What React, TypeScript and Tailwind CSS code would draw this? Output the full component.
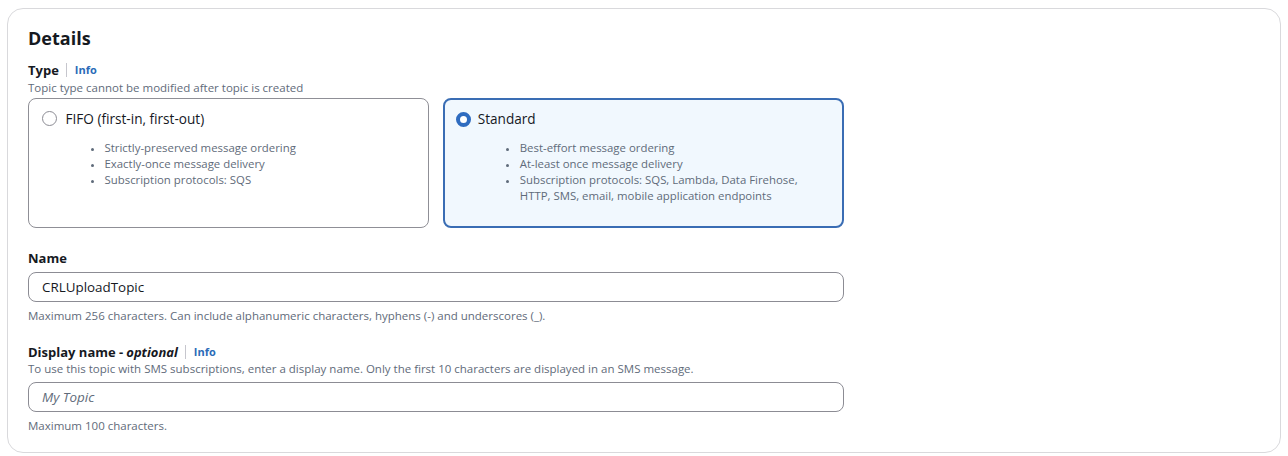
import { ReactNode } from "react";

const font = { fontFamily: '"Open Sans", "Noto Sans", sans-serif' };

const Info = () => (
  <span className="ml-[7px] border-l border-[#c6c6cd] pl-[8px] text-[11px] font-bold text-[#2a6bb8] leading-[14px]">
    Info
  </span>
);

type TileProps = {
  title: string;
  items: ReactNode[];
  selected?: boolean;
};

const Tile = ({ title, items, selected }: TileProps) => (
  <div
    className={
      selected
        ? "flex-1 h-[130px] rounded-[8px] border-2 border-[#3a6db4] bg-[#f1f8fe] pl-[10.5px] pr-[12px] pt-[10px]"
        : "flex-1 h-[130px] rounded-[8px] border-[1.5px] border-[#8f8f96] bg-white px-[12.5px] pt-[10.5px]"
    }
  >
    <div className={selected ? "flex items-center gap-[7px]" : "flex items-center gap-[9px]"}>
      {selected ? (
        <span className="h-[15px] w-[15px] rounded-full border-[4px] border-[#2f6cc0] bg-white" />
      ) : (
        <span className="h-[15px] w-[15px] rounded-full border-[1.5px] border-[#8c8c94] bg-white" />
      )}
      <span className="text-[13.6px] text-[#16191f] leading-[18px]">{title}</span>
    </div>
    <ul
      className={
        (selected ? "ml-[63px]" : "ml-[62px]") +
        " mt-[12px] list-disc text-[11.4px] leading-[16px] text-[#5f6b7a] marker:text-[9px]"
      }
    >
      {items.map((t, i) => (
        <li key={i} className="pl-[1px]">
          {t}
        </li>
      ))}
    </ul>
  </div>
);

const Field = ({
  label,
  desc,
  children,
  hint,
}: {
  label: ReactNode;
  desc?: string;
  children: ReactNode;
  hint: string;
}) => (
  <div className="flex flex-col">
    <div className="flex items-center text-[13px] font-bold leading-[16px] text-[#16191f]">{label}</div>
    {desc && <div className="text-[11.5px] leading-[14px] text-[#5f6b7a] mt-[2px]">{desc}</div>}
    {children}
    <div className="mt-[7px] text-[11.5px] leading-[14px] text-[#5f6b7a]">{hint}</div>
  </div>
);

export default function App() {
  return (
    <div className="min-h-[456px] w-[1288px] bg-white p-[7px] pt-[8px]" style={font}>
      <div className="h-[445px] w-[1274px] rounded-[16px] border border-[#d9d9dc] bg-white pl-[20px] pt-[17px]">
        <div className="w-[816px]">
          <h2 className="text-[18px] font-bold leading-[24px] text-[#16191f]">Details</h2>

          <div className="mt-[12px] flex items-center text-[13px] font-bold leading-[16px] text-[#16191f]">
            Type
            <Info />
          </div>
          <div className="mt-[3px] text-[11.5px] leading-[14px] text-[#5f6b7a]">
            Topic type cannot be modified after topic is created
          </div>

          <div className="mt-[3px] flex gap-[14px]">
            <Tile
              title="FIFO (first-in, first-out)"
              items={[
                "Strictly-preserved message ordering",
                "Exactly-once message delivery",
                "Subscription protocols: SQS",
              ]}
            />
            <Tile
              selected
              title="Standard"
              items={[
                "Best-effort message ordering",
                "At-least once message delivery",
                <>
                  Subscription protocols: SQS, Lambda, Data Firehose,
                  <br />
                  HTTP, SMS, email, mobile application endpoints
                </>,
              ]}
            />
          </div>

          <div className="mt-[22px]">
            <Field
              label="Name"
              hint="Maximum 256 characters. Can include alphanumeric characters, hyphens (-) and underscores (_)."
            >
              <div className="mt-[6px] flex h-[30px] items-center rounded-[8px] border-[1.5px] border-[#8c8c94] px-[13px] text-[13.4px] text-[#16191f]">
                CRLUploadTopic
              </div>
            </Field>
          </div>

          <div className="mt-[21px]">
            <Field
              label={
                <>
                  Display name - <i className="ml-[3px]">optional</i>
                  <Info />
                </>
              }
              desc="To use this topic with SMS subscriptions, enter a display name. Only the first 10 characters are displayed in an SMS message."
              hint="Maximum 100 characters."
            >
              <div className="mt-[6px] flex h-[30px] items-center rounded-[8px] border-[1.5px] border-[#8c8c94] px-[13px] text-[13.4px] italic text-[#5f6b7a]">
                My Topic
              </div>
            </Field>
          </div>
        </div>
      </div>
    </div>
  );
}
